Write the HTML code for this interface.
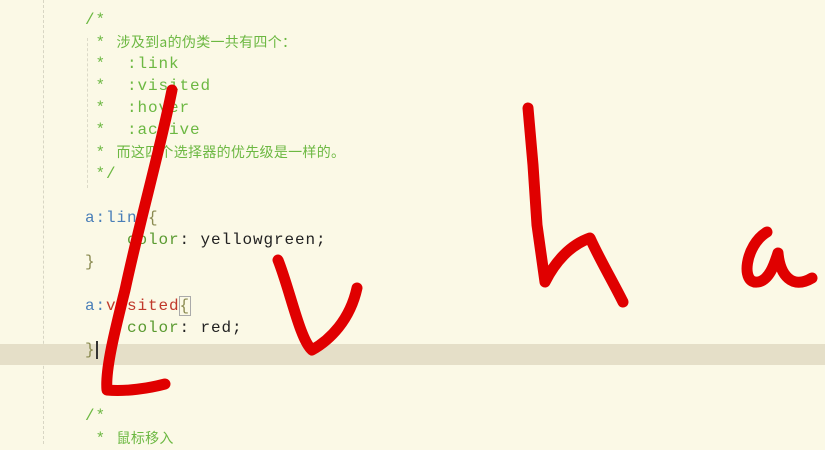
<!DOCTYPE html>
<html><head><meta charset="utf-8"><style>
html,body{margin:0;padding:0}
body{width:825px;height:444px;overflow:hidden;background:#fbf9e6;position:relative;font-family:"Liberation Mono","Noto Sans CJK SC",monospace;font-size:16px;letter-spacing:0.9px}
.g1{position:absolute;left:43px;top:0;height:444px;border-left:1px dashed #d8d6c4}
.g2{position:absolute;left:87px;top:38px;height:150px;border-left:1px dashed #dcdac8}
.hl{position:absolute;left:0;top:344px;width:825px;height:21px;background:#e5dfc8}
.l{position:absolute;left:85px;white-space:pre;line-height:22px;height:22px}
.c{color:#6cb842}.cn{font-family:"Noto Sans CJK SC",sans-serif;font-size:14px;letter-spacing:0.3px}
.s{color:#4a7fb8}.p{color:#5a9a30}.v{color:#222}.b{color:#8a8a50}.r{color:#c0392b}
svg{position:absolute;left:0;top:0}
</style></head><body>
<div class="g1"></div><div class="g2"></div><div class="hl"></div>
<div class="l c" style="top:9px">/*</div>
<div class="l c" style="top:31px"> * <span class="cn">涉及到a的伪类一共有四个：</span></div>
<div class="l c" style="top:53px"> *  :link</div>
<div class="l c" style="top:75px"> *  :visited</div>
<div class="l c" style="top:97px"> *  :hover</div>
<div class="l c" style="top:119px"> *  :active</div>
<div class="l c" style="top:141px"> * <span class="cn">而这四个选择器的优先级是一样的。</span></div>
<div class="l c" style="top:163px"> */</div>
<div class="l" style="top:207px"><span class="s">a:</span><span class="s">link</span><span class="b">{</span></div>
<div class="l" style="top:229px">    <span class="p">color</span><span class="v">: yellowgreen;</span></div>
<div class="l b" style="top:251px">}</div>
<div class="l" style="top:295px"><span class="s">a:</span><span class="r">visited</span><span class="b" style="outline:1px solid #aaa">{</span></div>
<div class="l" style="top:317px">    <span class="p">color</span><span class="v">: red;</span></div>
<div class="l b" style="top:339px">}<span style="border-left:2px solid #333"></span></div>
<div class="l c" style="top:405px">/*</div>
<div class="l c" style="top:427px"> * <span class="cn">鼠标移入</span></div>
<svg width="825" height="444" fill="none" stroke="#e00000" stroke-width="11" stroke-linecap="round" stroke-linejoin="round">
<path d="M172 90 C160 150,140 220,125 290 C115 330,105 370,107 390 C125 392,150 388,165 384"/>
<path d="M278 260 C290 290,300 340,312 350 C330 340,350 320,357 288"/>
<path d="M528 108 L533 165 L537 225 L545 282 C555 262,570 245,590 238 C600 260,612 280,623 302"/>
<path d="M767 232 C745 245,740 285,758 282 C770 280,775 262,778 253 C780 275,792 290,812 278"/>
</svg>
</body></html>
